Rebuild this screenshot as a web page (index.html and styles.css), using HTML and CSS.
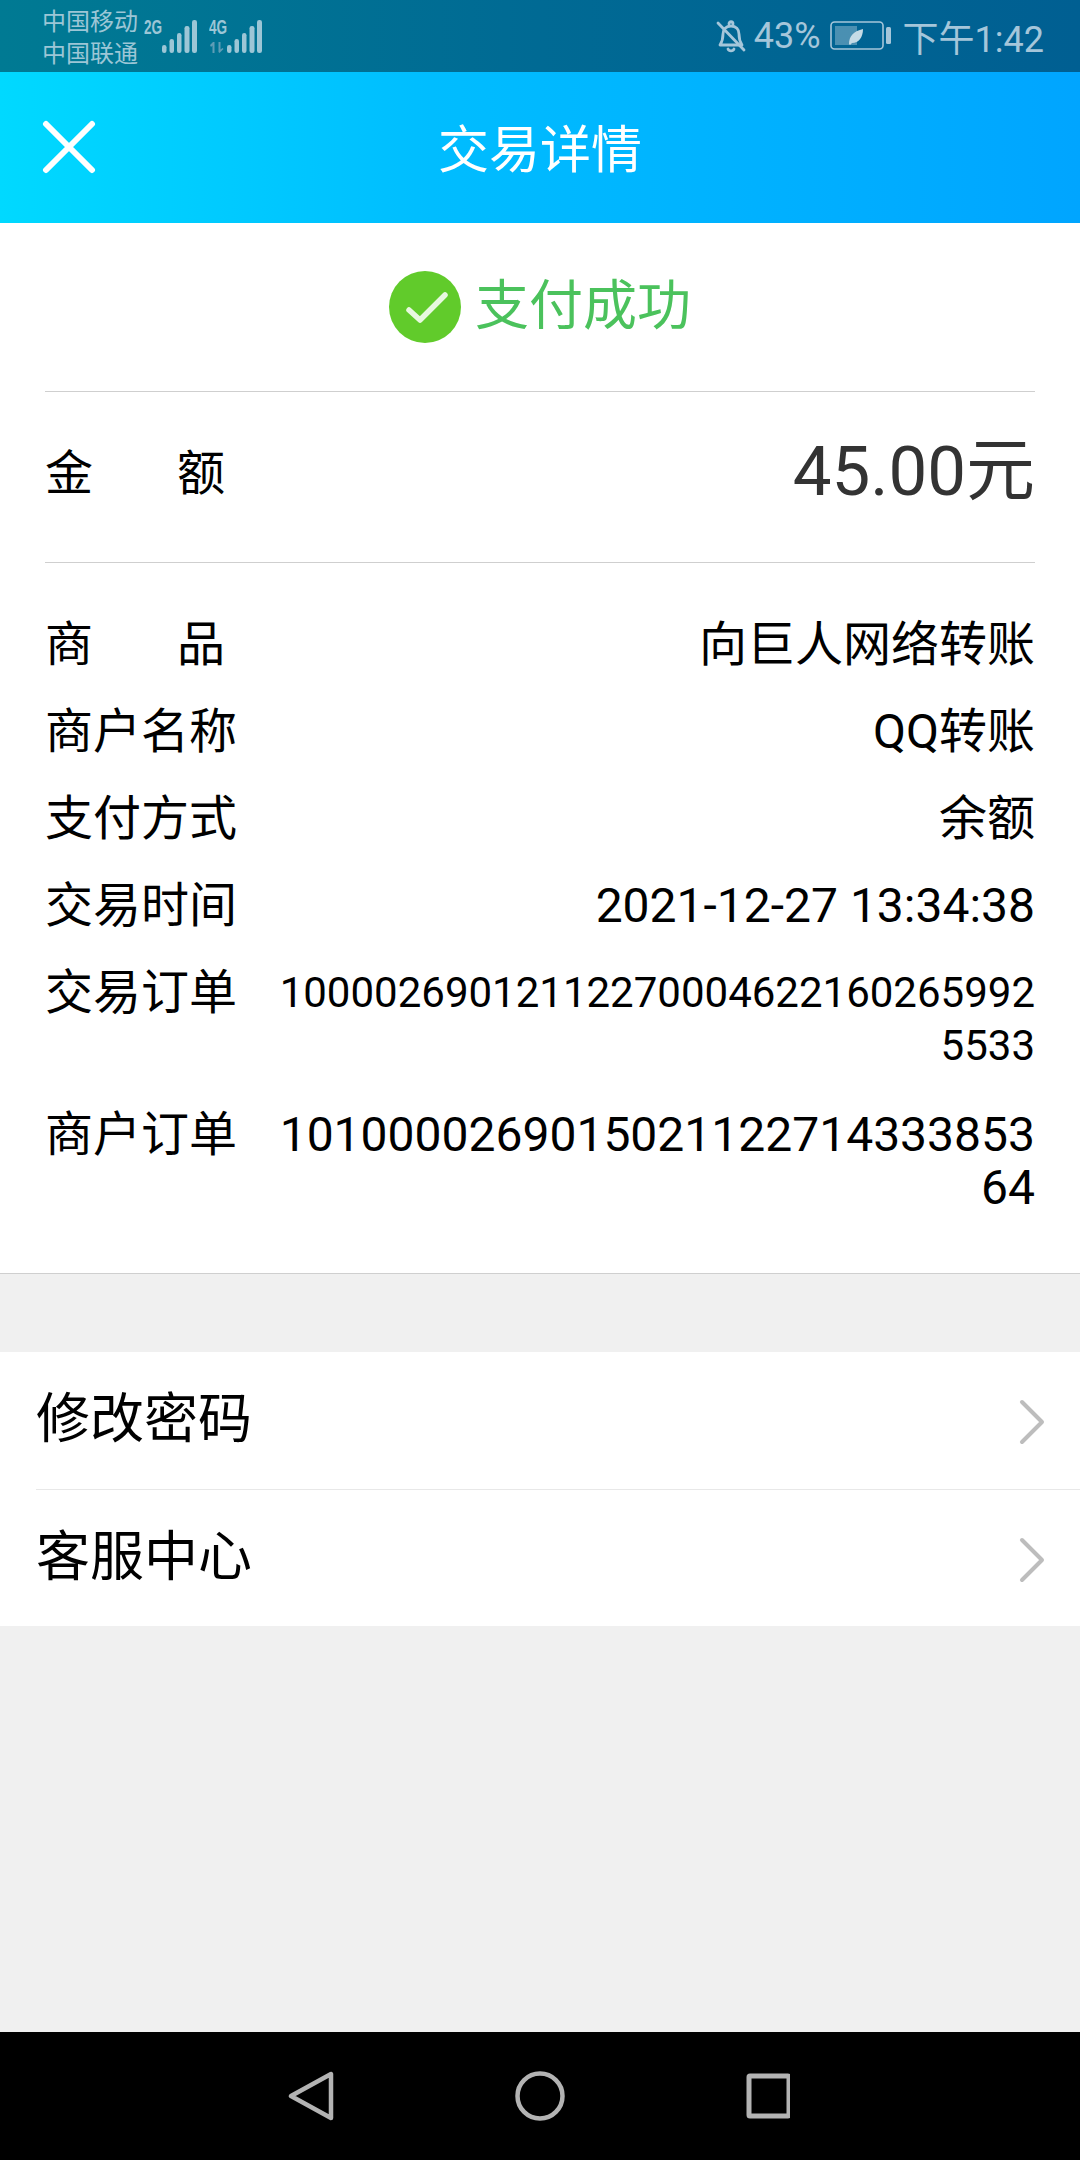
FILE: index.html
```html
<!DOCTYPE html>
<html lang="zh-CN">
<head>
  <meta charset="UTF-8">
  <meta name="viewport" content="width=device-width, initial-scale=1.0">
  <title>交易详情</title>
  <link rel="stylesheet" href="styles.css">
</head>
<body>

<div class="page">
  <div class="statusbar">
    <div class="carriers">
      <div>中国移动</div>
      <div>中国联通</div>
    </div>
    <div class="signal">
      <div class="net"><span class="net-name">2G</span></div>
      <svg width="35" height="33" viewBox="0 0 35 33"><g fill="#9cc6d6"><rect x="0" y="25" width="4.5" height="8" rx="2.2"/><rect x="7.5" y="19" width="4.5" height="14" rx="2.2"/><rect x="15" y="13" width="4.5" height="20" rx="2.2"/><rect x="22.5" y="6" width="5" height="27" rx="2.2"/><rect x="30" y="0" width="5" height="33" rx="2.2"/></g></svg>
    </div>
    <div class="signal signal-2">
      <div class="net"><span class="net-name">4G</span>
        <svg class="arrows" width="17" height="11" viewBox="0 0 17 11" fill="#5f9db6"><path d="M1 3l3-3h1.500v11H3.500V3.500L2 5zM9.500 0h2v7.500L13.500 6l1 1-4 4-1-1z"/></svg>
      </div>
      <svg width="35" height="33" viewBox="0 0 35 33"><g fill="#9cc6d6"><rect x="0" y="25" width="4.5" height="8" rx="2.2"/><rect x="7.5" y="19" width="4.5" height="14" rx="2.2"/><rect x="15" y="13" width="4.5" height="20" rx="2.2"/><rect x="22.5" y="6" width="5" height="27" rx="2.2"/><rect x="30" y="0" width="5" height="33" rx="2.2"/></g></svg>
    </div>
    <div class="status-right">
      <svg width="30" height="34" viewBox="0 0 30 34" fill="none" stroke="#a5c6da" stroke-width="2.8" stroke-linecap="round" stroke-linejoin="round"><path d="M4 26c2-3 3-6 3-11 0-5 3-8 8-8s8 3 8 8c0 5 1 8 3 11z"/><path d="M12 30c1 2.500 5 2.500 6 0"/><path d="M13 5c0-3 4-3 4 0"/><path d="M2 4l26 27"/></svg>
      <span class="pct">43%</span>
      <svg class="battery" width="61" height="30" viewBox="0 0 61 30"><rect x="1" y="1" width="52" height="27" rx="3.5" fill="none" stroke="#a5c6da" stroke-width="1.6"/><rect x="5" y="5" width="22" height="19" fill="#a5c6da" opacity=".45"/><path d="M19 23c0-8 5-13 14-15 0 8-4 14-11 14l-2 2z" fill="#c5dbe6"/><rect x="56" y="6" width="5" height="17" rx="1.500" fill="#a5c6da"/></svg>
      <span class="clock">下午1:42</span>
    </div>
  </div>

  <div class="header">
    <svg class="close" width="54" height="54" viewBox="0 0 54 54" fill="none" stroke="#fff" stroke-width="6" stroke-linecap="round"><path d="M4 4l46 46M50 4L4 50"/></svg>
    <div class="title">交易详情</div>
  </div>

  <div class="detail">
    <div class="success">
      <svg width="72" height="72" viewBox="0 0 72 72"><circle cx="36" cy="36" r="36" fill="#61cb2b"/><path d="M20 39l11 10 25-25" fill="none" stroke="#e8f8df" stroke-width="5.500" stroke-linecap="round" stroke-linejoin="round"/></svg>
      <span class="success-text">支付成功</span>
    </div>

    <div class="amount">
      <div class="label label-wide amount-label"><span>金</span><span>额</span></div>
      <span class="money">45.00元</span>
    </div>

    <div class="rows">
      <div class="row"><div class="label label-wide"><span>商</span><span>品</span></div><div class="value">向巨人网络转账</div></div>
      <div class="row"><div class="label">商户名称</div><div class="value">QQ转账</div></div>
      <div class="row"><div class="label">支付方式</div><div class="value">余额</div></div>
      <div class="row"><div class="label">交易时间</div><div class="value">2021-12-27 13:34:38</div></div>
      <div class="row row-order"><div class="label">交易订单</div><div class="value order-no order-small">100002690121122700046221602659925533</div></div>
      <div class="row row-order"><div class="label">商户订单</div><div class="value order-no">101000026901502112271433385364</div></div>
    </div>
  </div>

  <div class="menu">
    <div class="menu-item">
      <span class="menu-text">修改密码</span>
      <svg class="chevron" width="26" height="46" viewBox="0 0 26 46" fill="none" stroke="#bdbdbd" stroke-width="4" stroke-linecap="round" stroke-linejoin="round"><path d="M3 3l20 20L3 43"/></svg>
    </div>
    <div class="menu-item">
      <span class="menu-text">客服中心</span>
      <svg class="chevron" width="26" height="46" viewBox="0 0 26 46" fill="none" stroke="#bdbdbd" stroke-width="4" stroke-linecap="round" stroke-linejoin="round"><path d="M3 3l20 20L3 43"/></svg>
    </div>
  </div>

  <div class="filler"></div>

  <div class="navbar">
    <svg width="46" height="50" viewBox="0 0 46 50" fill="none" stroke="#b3b3b3" stroke-width="4.5" stroke-linejoin="round"><path d="M43 3v44L3 25z"/></svg>
    <svg width="50" height="50" viewBox="0 0 50 50" fill="none" stroke="#b3b3b3" stroke-width="4.5"><circle cx="25" cy="25" r="22.5"/></svg>
    <svg width="44" height="46" viewBox="0 0 44 46" fill="none" stroke="#b3b3b3" stroke-width="5" stroke-linejoin="round"><rect x="3" y="3" width="40" height="40" rx="1"/></svg>
  </div>
</div>

</body>
</html>
```

FILE: styles.css
```css
* {
  box-sizing: border-box;
}
body {
  margin: 0;
  font-family: Roboto, "Noto Sans CJK SC", sans-serif;
  background-color: #f0f0f0;
  color: #000;
}
.page {
  width: 1080px;
  height: 2160px;
  display: flex;
  flex-direction: column;
  overflow: hidden;
}

/* status bar */
.statusbar {
  height: 72px;
  display: flex;
  align-items: center;
  padding: 0 36px 0 42px;
  background: linear-gradient(90deg, #007a93, #006a94 50%, #005f92);
  color: #a5c6da;
}
.carriers {
  font-size: 24px;
  line-height: 32px;
  color: #9cc6d6;
  padding-top: 4px;
}
.signal {
  display: flex;
  margin-left: 6px;
  height: 33px;
}
.signal-2 {
  margin-left: 12px;
}
.net {
  font-family: "Liberation Sans", sans-serif;
  font-size: 20px;
  font-weight: bold;
  line-height: 14px;
  color: #9cc6d6;
  width: 18px;
}
.net-name {
  display: block;
  transform: scaleX(0.68);
  transform-origin: left;
}
.arrows {
  display: block;
  margin-top: 8px;
}
.status-right {
  margin-left: auto;
  display: flex;
  align-items: center;
}
.pct {
  font-size: 36px;
  margin-left: 8px;
}
.battery {
  margin-left: 9px;
}
.clock {
  font-size: 36px;
  margin-left: 12px;
}

/* header */
.header {
  height: 151px;
  display: flex;
  align-items: center;
  justify-content: center;
  position: relative;
  background: linear-gradient(90deg, #00d9ff, #00bdff 40%, #00a5ff);
}
.close {
  position: absolute;
  left: 42px;
  top: 48px;
}
.title {
  font-size: 51px;
  color: #fff;
  padding-bottom: 4px;
}

/* detail card */
.detail {
  height: 1051px;
  padding: 0 45px;
  background-color: #fff;
  border-bottom: 1px solid #cfcfcf;
}
.success {
  height: 169px;
  display: flex;
  align-items: center;
  justify-content: center;
  gap: 14px;
  font-size: 54px;
  color: #4bc25c;
  border-bottom: 1px solid #cfcfcf;
}
.success-text {
  padding-bottom: 12px;
}
.amount {
  height: 171px;
  display: flex;
  align-items: center;
  justify-content: space-between;
  border-bottom: 1px solid #cfcfcf;
}
.amount-label {
  padding-bottom: 6px;
  height: 60px;
}
.money {
  font-size: 69px;
  color: #333;
  padding-bottom: 25px;
}
.label {
  font-size: 48px;
  line-height: 54px;
  width: 192px;
  flex-shrink: 0;
  white-space: nowrap;
}
.label-wide {
  display: flex;
  justify-content: space-between;
  width: 180px;
}
.rows {
  padding-top: 55px;
}
.row {
  display: flex;
  justify-content: space-between;
  min-height: 87px;
  gap: 40px;
}
.row-order {
  min-height: 142px;
}
.value {
  font-size: 48px;
  line-height: 54px;
  text-align: right;
  word-break: break-all;
}
.order-no {
  line-height: 53px;
}
.order-small {
  font-size: 42px;
}

/* menu */
.menu {
  margin-top: 78px;
  padding-left: 36px;
  background-color: #fff;
}
.menu-item {
  height: 137px;
  display: flex;
  align-items: center;
  justify-content: space-between;
  padding-right: 35px;
  font-size: 54px;
}
.menu-item + .menu-item {
  border-top: 1px solid #e8e8e8;
}
.menu-text {
  padding-bottom: 12px;
}
.chevron {
  margin-top: 3px;
}
.filler {
  flex: 1;
}

/* android nav */
.navbar {
  height: 128px;
  display: flex;
  align-items: center;
  justify-content: center;
  gap: 181px;
  padding-right: 2px;
  background-color: #000;
}
```
